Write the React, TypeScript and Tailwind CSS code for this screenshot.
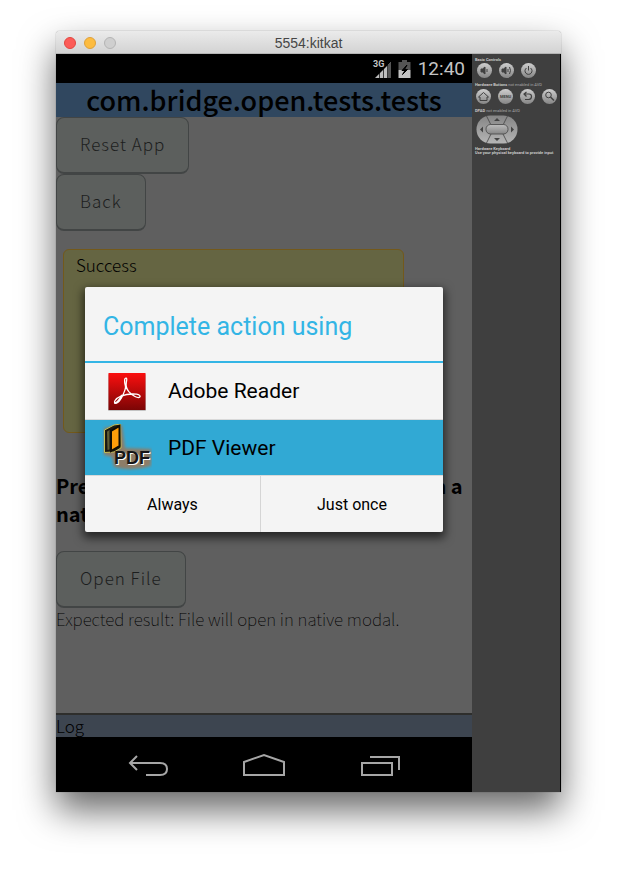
import type { ReactNode } from "react";

const APP_FONT = "font-['Noto_Sans_CJK_JP','Noto_Sans_CJK_SC',sans-serif]";

function AppButton({ children }: { children: ReactNode }) {
  return (
    <button
      type="button"
      className="block h-[57px] self-start rounded-lg border border-b-2 border-[#424545] bg-[#5c5f5d] px-[23px] pb-[3px] text-[17px] font-light tracking-[1px] text-[#1c1e1e]"
    >
      {children}
    </button>
  );
}

function TitleBar() {
  return (
    <header className="relative flex h-[23px] items-center justify-center rounded-t-[4px] border-b border-[#b4b4b4] bg-linear-to-b from-[#ebebeb] to-[#d3d3d3] pt-[2px] font-['Liberation_Sans',Arial,sans-serif] text-[14px] text-[#464646]">
      <div className="absolute left-2 flex gap-2">
        <button type="button" aria-label="Close" className="size-3 rounded-full border border-[#e2463f] bg-[#fc5b57]" />
        <button type="button" aria-label="Minimize" className="size-3 rounded-full border border-[#dfa13a] bg-[#fdbc40]" />
        <button type="button" aria-label="Zoom" className="size-3 rounded-full border border-[#b4b4b4] bg-[#cfcfcf]" />
      </div>
      <h1>5554:kitkat</h1>
    </header>
  );
}

function StatusBar() {
  return (
    <div className="flex h-[29px] items-center justify-end bg-black pr-[7px] text-[#c4c4c4]">
      <svg width="20" height="20" viewBox="0 0 20 20" className="mr-[6px]" aria-label="3G signal">
        <path d="M3 19 L19 3 V19 Z" fill="#bdbdbd" />
        <path d="M16 6 L19 3 V19 H16 Z" fill="#555" />
        <path d="M7.500 12V20M11.500 8V20M15.500 4V20" stroke="#000" strokeWidth="0.700" />
        <text x="1" y="8" fontSize="9" fontWeight="700" fontFamily="Roboto, sans-serif" fill="#c4c4c4" stroke="#000" strokeWidth="2" paintOrder="stroke">
          3G
        </text>
      </svg>
      <svg width="13" height="18" viewBox="0 0 13 18" className="mr-[7px]" aria-label="Battery charging">
        <path d="M4 0h5v2h3.500v8H0.500V2H4z" fill="#545454" />
        <path d="M0.500 10h12v8h-12z" fill="#c4c4c4" />
        <path d="M9 5 4 10.500h3L4.500 14.500l5-5H6.500z" fill="#000" stroke="#000" />
      </svg>
      <span className="text-[19px] leading-[29px]">12:40</span>
    </div>
  );
}

function AdobeIcon() {
  return (
    <svg width="40" height="40" viewBox="0 0 40 40" aria-hidden="true">
      <defs>
        <linearGradient id="adobe" x1="0" y1="0" x2="0" y2="1">
          <stop offset="0" stopColor="#fb0f0f" />
          <stop offset="1" stopColor="#7b0505" />
        </linearGradient>
      </defs>
      <rect x="1" y="2" width="38" height="37" rx="1" fill="#000" opacity="0.2" />
      <rect x="1.500" y="1" width="37" height="37" fill="url(#adobe)" />
      <path
        d="M19.300 6.200c-2.200-.5-2 3.500-.9 7.800.5 2-.6 5-2.600 9.200-1.900 4-5 8.300-7.300 8-2.500-.8-.2-4.500 5.500-7 4.500-1.800 10.500-2.500 15.500-2 3 .4 4.300 1.800 3.300 2.900-1.800 1.600-7.500-1.300-11-5.400-2.800-3.500-3-6.300-2.500-9.200.4-2.300.9-4 0-4.300z"
        fill="none"
        stroke="#fff"
        strokeWidth="1.300"
      />
      <path d="M8 31c2 .3 4.500-3 7-7.500" fill="none" stroke="#fff" strokeWidth="2" strokeLinecap="round" />
    </svg>
  );
}

function PdfViewerIcon() {
  return (
    <svg width="50" height="50" viewBox="0 0 50 50" aria-hidden="true">
      <defs>
        <filter id="halo" x="-20%" y="-20%" width="140%" height="140%">
          <feGaussianBlur stdDeviation="1.500" />
        </filter>
      </defs>
      <path d="M2 4 20 1 23 24 49 25V42Q30 48 12 43L10 33 2 31z" fill="#8d7d68" filter="url(#halo)" />
      <path d="M2.500 6 12 1l6.500-1 .5 24-7 4-9.500.5z" fill="#1c1a10" stroke="#c6bf57" strokeWidth="1" />
      <path d="M4.500 7.500 8 5v21l-3 .5z" fill="#605c32" stroke="#111" />
      <path d="M9 7 17.500 2v20L9 27z" fill="#ff9d0a" stroke="#100c04" strokeWidth="2" />
      <text x="13" y="41" fontSize="18" fontWeight="700" fontFamily="Liberation Sans, Arial, sans-serif" fill="#fff">
        PDF
      </text>
      <text x="12" y="40" fontSize="18" fontWeight="700" fontFamily="Liberation Sans, Arial, sans-serif" fill="#151515">
        PDF
      </text>
    </svg>
  );
}

function ChooserDialog() {
  return (
    <div className="absolute inset-0 flex items-center justify-center px-[29px] pb-px">
      <div
        role="dialog"
        aria-labelledby="chooser-title"
        className="w-full rounded-[2px] bg-[#f4f4f4] text-black shadow-[0_4px_10px_2px_rgba(0,0,0,0.6)]"
      >
        <h3 id="chooser-title" className="h-[76px] border-b-2 border-[#33b5e5] px-[18px] pt-[2px] text-[25px] leading-[76px] text-[#33b5e5]">
          Complete action using
        </h3>
        <button type="button" className="flex h-[57px] w-full items-center border-b border-[#d9d9d9] pt-[2px] text-left text-[21px]">
          <span className="flex w-[83px] justify-center">
            <AdobeIcon />
          </span>
          Adobe Reader
        </button>
        <button type="button" className="flex h-[55px] w-full items-center bg-[#31a9d4] pt-[2px] text-left text-[21px]">
          <span className="flex w-[83px] justify-center">
            <PdfViewerIcon />
          </span>
          PDF Viewer
        </button>
        <div className="grid h-[57px] grid-cols-[176px_1fr] border-t border-[#d9d9d9] text-base">
          <button type="button" className="border-r border-[#d5d5d5] pt-[2px]">
            Always
          </button>
          <button type="button" className="pt-[2px]">
            Just once
          </button>
        </div>
      </div>
    </div>
  );
}

function NavBar() {
  return (
    <nav className="flex h-[55px] items-center justify-center gap-[70px] bg-black pt-[2px]">
      <button type="button" aria-label="Back">
        <svg width="46" height="28" viewBox="0 0 46 28" fill="none" stroke="#a6a6a6" strokeWidth="2">
          <path d="M12 4 5 11l7 7M5 11h30q7 0 7 6t-7 6H21" />
        </svg>
      </button>
      <button type="button" aria-label="Home">
        <svg width="46" height="28" viewBox="0 0 46 28" fill="none" stroke="#a6a6a6" strokeWidth="2">
          <path d="M3 23V10L23 3l20 7v13z" />
        </svg>
      </button>
      <button type="button" aria-label="Recent apps">
        <svg width="46" height="28" viewBox="0 0 46 28" fill="none" stroke="#a6a6a6" strokeWidth="2">
          <path d="M5 11h30v12H5zM13 5h29v13" />
        </svg>
      </button>
    </nav>
  );
}

function RoundKey({ label, children }: { label: string; children: ReactNode }) {
  return (
    <button
      type="button"
      aria-label={label}
      className="flex size-[15px] items-center justify-center rounded-full bg-linear-to-b from-[#cfcfcf] to-[#858585] text-[#414141]"
    >
      <svg width="15" height="15" viewBox="0 0 15 15" fill="none" stroke="currentColor" strokeWidth="1">
        {children}
      </svg>
    </button>
  );
}

function Controls() {
  return (
    <aside className="w-[89px] shrink-0 border-r border-black bg-[#3f3f3f] pt-[3px] pl-[3px] font-[Roboto,sans-serif] text-[4px] leading-[5px] text-[#a8a8a8]">
      <h2 className="font-bold text-[#c8c8c8]">Basic Controls</h2>
      <div className="flex gap-[7px] pt-[1px] pl-[2px]">
        <RoundKey label="Volume down">
          <path d="M4 6h1.500L8 4v7L5.500 9H4z" fill="currentColor" />
          <path d="M10 6v3" />
        </RoundKey>
        <RoundKey label="Volume up">
          <path d="M3 6h1.500L7 4v7L4.500 9H3z" fill="currentColor" />
          <path d="M9 6v3M10.500 4q2 3.500 0 7" />
        </RoundKey>
        <RoundKey label="Power">
          <path d="M5.500 5a3.500 3.500 0 1 0 4 0M7.500 3v4.500" />
        </RoundKey>
      </div>
      <p className="pt-[4px] whitespace-nowrap">
        <b className="text-[#c8c8c8]">Hardware Buttons</b> not enabled in AVD
      </p>
      <div className="flex gap-[7px] pt-[2px] pl-[1px]">
        <RoundKey label="Home">
          <path d="M2.500 8 7.500 3.500l5 4.500H11v3.500H4V8z" />
        </RoundKey>
        <RoundKey label="Menu">
          <text x="7.500" y="9" textAnchor="middle" fontSize="4" fontWeight="700" fill="currentColor" stroke="none">
            MENU
          </text>
        </RoundKey>
        <RoundKey label="Back">
          <path d="M6.500 3 4 5l2.500 2.500M4 5h5q2.500 0 2.500 2.500T9 10.500H5" strokeWidth="1.200" />
        </RoundKey>
        <RoundKey label="Search">
          <circle cx="6.500" cy="6" r="2.800" />
          <path d="m8.500 8 3.500 3.500" strokeWidth="1.500" />
        </RoundKey>
      </div>
      <p className="pt-[4px] whitespace-nowrap">
        <b className="text-[#c8c8c8]">DPAD</b> not enabled in AVD
      </p>
      <svg width="42" height="29" viewBox="0 0 42 29" className="mt-[2px] ml-px" aria-label="Directional pad">
        <defs>
          <linearGradient id="pad" x1="0" y1="0" x2="0" y2="1">
            <stop offset="0" stopColor="#858585" />
            <stop offset="1" stopColor="#b5b5b5" />
          </linearGradient>
          <linearGradient id="key" x1="0" y1="0" x2="0" y2="1">
            <stop offset="0" stopColor="#bdbdbd" />
            <stop offset="1" stopColor="#858585" />
          </linearGradient>
        </defs>
        <rect x="0.500" y="0.500" width="41" height="28" rx="14" fill="url(#pad)" />
        <path d="m10 0 5 10M32 0l-5 10M10 29l5-10M32 29l-5-10" stroke="#444" strokeWidth="0.800" />
        <rect x="10" y="9.500" width="22" height="9.500" rx="4.500" fill="url(#key)" stroke="#444" strokeWidth="0.800" />
        <path d="m21 3 3 3h-6zM21 26l3-3h-6zM4 14.500l3-3v6zM38 14.500l-3-3v6z" fill="#444" />
      </svg>
      <p className="pt-[3px] leading-[4px] font-bold whitespace-nowrap text-[#c8c8c8]">
        Hardware Keyboard
        <br />
        Use your physical keyboard to provide input
      </p>
    </aside>
  );
}

export default function App() {
  return (
    <div className="min-h-screen bg-white px-14 pt-[31px] pb-20">
      <main className="rounded-t-[4px] shadow-[0_0_1px_rgba(0,0,0,0.6),0_18px_36px_rgba(0,0,0,0.6)]">
        <TitleBar />
        <div className="flex">
          <div className="min-w-0 flex-1 font-[Roboto,sans-serif]">
            <StatusBar />
            <div className="relative bg-[#5f5f5f]">
              <section className={`flex h-[654px] flex-col text-[17px] font-light text-black ${APP_FONT}`}>
                <h2 className="h-[34px] bg-[#30475f] text-center text-[27px] leading-[34px] font-medium">
                  com.bridge.open.tests.tests
                </h2>
                <div>
                  <AppButton>Reset App</AppButton>
                  <AppButton>Back</AppButton>
                </div>
                <div className="mt-[18px] ml-[7px] h-[184px] w-[341px] shrink-0 rounded-md border border-[#73591b] bg-[#656542] px-3 leading-[30px]">
                  Success
                </div>
                <p className="mt-[39px] mb-[23px] text-xl leading-[28px] font-bold whitespace-nowrap">
                  Press the button below to open a PDF in a<br />native modal
                </p>
                <AppButton>Open File</AppButton>
                <p className="leading-[22px] font-thin">Expected result: File will open in native modal.</p>
                <footer className="mt-auto h-6 border-t-2 border-[#2e2e2c] bg-[#3d4550] leading-[22px]">Log</footer>
              </section>
              <ChooserDialog />
            </div>
            <NavBar />
          </div>
          <Controls />
        </div>
      </main>
    </div>
  );
}
